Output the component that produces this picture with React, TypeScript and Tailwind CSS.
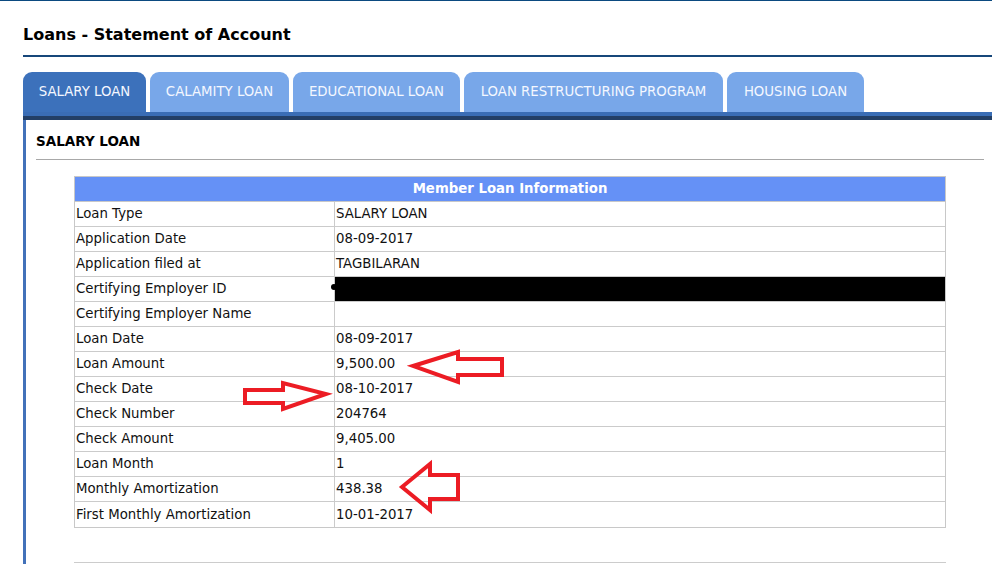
const tabs = [
  { label: "SALARY LOAN", w: "w-[123px]", active: true },
  { label: "CALAMITY LOAN", w: "w-[139px]" },
  { label: "EDUCATIONAL LOAN", w: "w-[167px]" },
  { label: "LOAN RESTRUCTURING PROGRAM", w: "w-[259px]" },
  { label: "HOUSING LOAN", w: "w-[137px]" },
];

const rows: Array<{ label: string; value: string; redacted?: boolean }> = [
  { label: "Loan Type", value: "SALARY LOAN" },
  { label: "Application Date", value: "08-09-2017" },
  { label: "Application filed at", value: "TAGBILARAN" },
  { label: "Certifying Employer ID", value: "", redacted: true },
  { label: "Certifying Employer Name", value: "" },
  { label: "Loan Date", value: "08-09-2017" },
  { label: "Loan Amount", value: "9,500.00" },
  { label: "Check Date", value: "08-10-2017" },
  { label: "Check Number", value: "204764" },
  { label: "Check Amount", value: "9,405.00" },
  { label: "Loan Month", value: "1" },
  { label: "Monthly Amortization", value: "438.38" },
  { label: "First Monthly Amortization", value: "10-01-2017" },
];

function Arrows() {
  // red hand-drawn style markers over the table
  return (
    <svg
      className="pointer-events-none absolute left-0 top-0"
      width="992"
      height="564"
      viewBox="0 0 992 564"
    >
      <g fill="none" stroke="#ec1c24" strokeWidth="4" strokeLinejoin="miter">
        <polygon points="413,365 458,351 458,358 502,358 502,374 458,374 458,381" />
        <polygon points="245,389 283,389 283,382 326,393 283,408 283,402 245,402" />
        <polygon points="402,486 430,463 430,474 458,474 458,498 430,498 430,509" />
      </g>
    </svg>
  );
}

export default function App() {
  return (
    <div className="relative h-[564px] w-[992px] overflow-hidden border-t border-[#0b4a80] bg-white font-['DejaVu_Sans',Verdana,sans-serif] text-black">
      <div className="ml-[23px]">
        <div className="border-b-2 border-[#16477a] pb-[10px] pt-[24px] text-[16px] font-bold leading-[20px] text-black">
          Loans - Statement of Account
        </div>

        <div className="mt-[15px] flex gap-[4px]">
          {tabs.map((t) => (
            <div
              key={t.label}
              className={`${t.w} flex h-[40px] items-center justify-center rounded-t-[9px] text-[13.3px] leading-none text-[#f4f7ff] ${
                t.active ? "bg-[#3c71bb]" : "bg-[#78a7e9]"
              }`}
            >
              {t.label}
            </div>
          ))}
        </div>
        <div className="h-[4px] bg-[#3a6db5]" />
        <div className="h-[4px] bg-[#233f66]" />

        <div className="h-[444px] border-l-[3px] border-[#4271b9] pl-[10px] pr-[8px]">
          <div className="pt-[13px] text-[13.5px] font-bold leading-[16px]">SALARY LOAN</div>
          <div className="mt-[10px] h-px bg-[#a8a8a8]" />

          <div className="ml-[38px] mt-[16px] w-[872px]">
            <div className="border border-[#c8c8c8] text-[13.3px]">
              <div className="flex h-[25px] items-center justify-center border-b border-[#c8c8c8] bg-[#6591f6] font-bold text-white">
                Member Loan Information
              </div>
              {rows.map((r, i) => (
                <div
                  key={r.label}
                  className={`flex h-[25px] ${i < rows.length - 1 ? "border-b border-[#cbcbcb]" : ""}`}
                >
                  <div className="flex w-[260px] items-center border-r border-[#cbcbcb] pl-[1px] text-[#111]">
                    {r.label}
                  </div>
                  <div
                    className={`relative flex flex-1 items-center pl-[1px] text-[#111] ${
                      r.redacted ? "bg-black" : ""
                    }`}
                  >
                    {r.redacted && (
                      <span className="absolute left-[-4px] top-[7px] h-[6px] w-[6px] rounded-full bg-black" />
                    )}
                    {r.value}
                  </div>
                </div>
              ))}
            </div>
            <div className="mt-[34px] h-px bg-[#cccccc]" />
          </div>
        </div>
      </div>
      <Arrows />
    </div>
  );
}
